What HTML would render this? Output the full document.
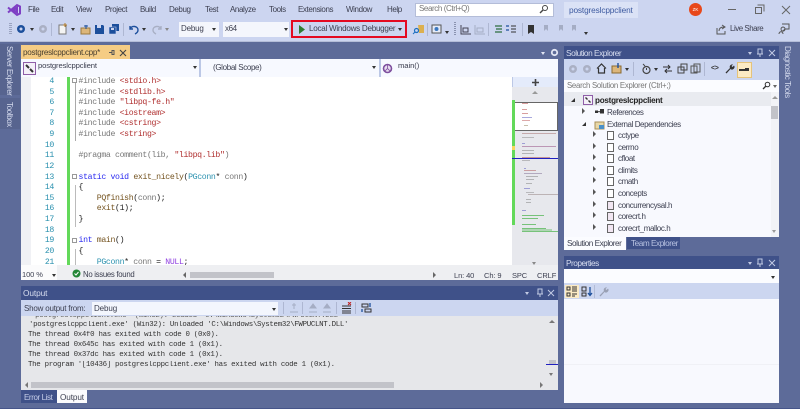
<!DOCTYPE html>
<html><head><meta charset="utf-8"><style>
html,body{margin:0;padding:0}
body{width:800px;height:409px;overflow:hidden;position:relative;background:#5d6b99;font-family:"Liberation Sans",sans-serif;font-size:8px;color:#3c3f50}
.a,.t,.c,.o,svg{position:absolute}
svg{filter:blur(.25px)}
.t{white-space:pre;line-height:10px;letter-spacing:-.4px;filter:blur(.3px)}
.c{font-family:"Liberation Mono",monospace;font-size:8.2px;letter-spacing:-.35px;white-space:pre;line-height:10px;color:#222;left:78.5px;filter:blur(.3px)}
.o{font-family:"Liberation Mono",monospace;font-size:7.4px;letter-spacing:-.29px;white-space:pre;line-height:10px;color:#333;filter:blur(.3px)}
.n{font-family:"Liberation Mono",monospace;font-size:8.2px;letter-spacing:-.35px;line-height:10px;color:#2b91af;position:absolute;left:32px;width:22px;text-align:right;filter:blur(.3px)}
.k{color:#2a2af0}.s{color:#b03030}.g{color:#777}.y{color:#2b91af}.f{color:#74531f}.m{color:#8f3fe0}
.v{writing-mode:vertical-rl;position:absolute;color:#d5dbee;font-size:8px;letter-spacing:-.4px;white-space:pre;filter:blur(.25px)}
.d{width:0;height:0;position:absolute;border-left:2.5px solid transparent;border-right:2.5px solid transparent;border-top:3px solid #333}
.r{width:0;height:0;position:absolute;border-top:3.5px solid transparent;border-bottom:3.5px solid transparent;border-left:3.5px solid #555}
.i{position:absolute;border:1px solid #666;background:#fff;width:5px;height:7px}
</style></head><body>
<div class="a" style="left:0;top:0;width:800px;height:41px;background:#ccd5f0"></div>
<div class="a" style="left:0;top:41px;width:800px;height:1px;background:#b4bdd8"></div>
<svg style="left:7px;top:3px" width="14" height="14" viewBox="0 0 14 14"><path d="M1 4.5L4 7 1 9.5M4 7L10 2l3 1.5v7L10 12 4 7M10 4.7v4.6L7 7z" fill="none" stroke="#7e3fc4" stroke-width="2"/></svg>
<div class="t" style="left:28px;top:5px">File</div>
<div class="t" style="left:51px;top:5px">Edit</div>
<div class="t" style="left:76px;top:5px">View</div>
<div class="t" style="left:105px;top:5px">Project</div>
<div class="t" style="left:140px;top:5px">Build</div>
<div class="t" style="left:169px;top:5px">Debug</div>
<div class="t" style="left:205px;top:5px">Test</div>
<div class="t" style="left:230px;top:5px">Analyze</div>
<div class="t" style="left:269px;top:5px">Tools</div>
<div class="t" style="left:298px;top:5px">Extensions</div>
<div class="t" style="left:346px;top:5px">Window</div>
<div class="t" style="left:387px;top:5px">Help</div>
<div class="a" style="left:415px;top:3px;width:137px;height:12px;background:#fff;border:1px solid #b4bdd8"></div>
<div class="t" style="left:419px;top:4px;color:#777">Search (Ctrl+Q)</div>
<svg style="left:539px;top:4px" width="10" height="10"><circle cx="6" cy="4" r="2.5" fill="none" stroke="#444"/><path d="M4 6L1 9" stroke="#444" stroke-width="1.4"/></svg>
<div class="a" style="left:564px;top:2px;width:74px;height:16px;background:#dbe2f6"></div>
<div class="t" style="left:569px;top:5px;color:#3d5aa0;font-size:8.3px;letter-spacing:-.15px">postgreslcppclient</div>
<div class="a" style="left:689px;top:3px;width:13px;height:13px;border-radius:50%;background:#e8481a;color:#fff;font-size:4.5px;line-height:13px;text-align:center">ZK</div>
<div class="a" style="left:728px;top:9px;width:8px;height:1px;background:#666"></div>
<div class="a" style="left:755px;top:7px;width:5px;height:5px;border:1px solid #666;background:#ccd5f0;box-shadow:1.5px -1.5px 0 0 #ccd5f0,2.5px -2.5px 0 0 #666"></div>
<svg style="left:781px;top:5px" width="10" height="10"><path d="M1 1L9 9M9 1L1 9" stroke="#666"/></svg>

<!-- toolbar -->
<div class="a" style="left:9px;top:23px;width:3px;height:12px;background:repeating-linear-gradient(#9aa3c0 0 1px,transparent 1px 2px)"></div>
<svg style="left:16px;top:24px" width="11" height="11"><circle cx="5" cy="5" r="4" fill="#1c4f9c"/><circle cx="5" cy="5" r="1.5" fill="#ccd5f0"/></svg>
<div class="d" style="left:30px;top:28px"></div>
<svg style="left:38px;top:24px" width="11" height="11"><circle cx="5" cy="5" r="4" fill="#aab0c4"/><circle cx="5" cy="5" r="1.5" fill="#ccd5f0"/></svg>
<div class="a" style="left:51px;top:23px;width:1px;height:13px;background:#aeb7d2"></div>
<svg style="left:58px;top:23px" width="11" height="12"><rect x="1" y="2" width="7" height="9" fill="#f4f4f4" stroke="#777"/><path d="M7 0v4M5 2h4" stroke="#b07a2a"/></svg>
<div class="d" style="left:71px;top:28px"></div>
<svg style="left:80px;top:24px" width="12" height="11"><path d="M1 4h9v6H1z" fill="#dcb67a" stroke="#9b7a3f"/><path d="M6 5V1M4 2h4" stroke="#1c4f9c"/></svg>
<svg style="left:94px;top:24px" width="11" height="11"><path d="M1 1h8l1 1v8H1z" fill="#1c4f9c"/><rect x="3" y="1" width="4" height="3" fill="#ccd5f0"/></svg>
<svg style="left:108px;top:23px" width="12" height="12"><path d="M4 1h7v7H4z" fill="#1c4f9c"/><path d="M1 4h7v7H1z" fill="#1c4f9c" stroke="#ccd5f0" stroke-width=".6"/><rect x="3" y="5" width="3" height="2" fill="#ccd5f0"/></svg>
<div class="a" style="left:123px;top:23px;width:1px;height:13px;background:#aeb7d2"></div>
<svg style="left:128px;top:24px" width="12" height="11"><path d="M2 2v3h3M2 5C4 1 10 2 10 6c0 2-1 3-3 4" fill="none" stroke="#1c4f9c" stroke-width="1.4"/></svg>
<div class="d" style="left:142px;top:28px"></div>
<svg style="left:151px;top:24px" width="12" height="11"><path d="M10 2v3H7M10 5C8 1 2 2 2 6c0 2 1 3 3 4" fill="none" stroke="#a8afc4" stroke-width="1.4"/></svg>
<div class="d" style="left:165px;top:28px;border-top-color:#888"></div>
<div class="a" style="left:179px;top:22px;width:40px;height:15px;background:#f4f6fc"></div>
<div class="t" style="left:181px;top:24px;letter-spacing:-.2px">Debug</div>
<div class="d" style="left:212px;top:28px"></div>
<div class="a" style="left:223px;top:22px;width:66px;height:15px;background:#f4f6fc"></div>
<div class="t" style="left:225px;top:24px">x64</div>
<div class="d" style="left:284px;top:28px"></div>
<div class="a" style="left:291px;top:20px;width:112px;height:14px;border:2px solid #e40a22;box-sizing:content-box;background:#ccd5f0"></div>
<svg style="left:298px;top:25px" width="8" height="9"><path d="M1 0l6 4.5L1 9z" fill="#2e7d32"/></svg>
<div class="t" style="left:309px;top:24px;font-size:8.1px;letter-spacing:-.27px">Local Windows Debugger</div>
<div class="d" style="left:398px;top:28px"></div>
<svg style="left:412px;top:23px" width="13" height="13"><path d="M6 2h6v8H7z" fill="#dcb050"/><circle cx="4.5" cy="7.5" r="2" fill="none" stroke="#1c6fc0" stroke-width="1.2"/><path d="M3 9L1 11" stroke="#1c6fc0"/></svg>
<div class="a" style="left:427px;top:23px;width:1px;height:13px;background:#aeb7d2"></div>
<svg style="left:431px;top:23px" width="12" height="12"><rect x="1" y="2" width="9" height="8" fill="#e5ebf8" stroke="#555"/><circle cx="5.5" cy="6" r="2" fill="#3b78c0"/></svg>
<div class="d" style="left:445px;top:31px"></div>
<div class="a" style="left:454px;top:22px;width:2px;height:13px;background:repeating-linear-gradient(#8a93b0 0 1px,transparent 1px 2px)"></div>
<svg style="left:460px;top:24px" width="12" height="11"><path d="M1 1v9h10M3 4h5v4H3z" fill="none" stroke="#445"/></svg>
<svg style="left:474px;top:24px" width="12" height="11"><path d="M1 1v9h10M3 4h6v4H3z" fill="none" stroke="#a5adc4"/></svg>
<div class="a" style="left:488px;top:23px;width:1px;height:13px;background:#aeb7d2"></div>
<svg style="left:493px;top:24px" width="11" height="11"><path d="M2 2h7M3 5h6M2 8h7" stroke="#2d6d3f" stroke-width="1.2"/></svg>
<svg style="left:506px;top:24px" width="11" height="11"><path d="M5 2h5M5 5h5M5 8h5" stroke="#333"/><path d="M0 2h3M0 6h3" stroke="#1c4f9c" stroke-width="1.3"/></svg>
<div class="a" style="left:522px;top:23px;width:1px;height:13px;background:#aeb7d2"></div>
<svg style="left:527px;top:24px" width="9" height="11"><path d="M1 1h6v9L4 8 1 10z" fill="#333"/></svg>
<svg style="left:542px;top:24px" width="10" height="10"><path d="M2 1h4v6L4 5 2 7zM7 5l2 2" fill="#a5adc4"/></svg>
<svg style="left:557px;top:24px" width="10" height="10"><path d="M2 1h4v6L4 5 2 7zM7 5l2 2" fill="#a5adc4"/></svg>
<svg style="left:570px;top:24px" width="10" height="10"><path d="M2 1h4v6L4 5 2 7zM7 5l2 2" fill="#a5adc4"/></svg>
<div class="d" style="left:584px;top:32px"></div>
<svg style="left:716px;top:24px" width="11" height="11"><path d="M1 4v6h8V7M3 7c0-3 2-4 5-4M6 1l3 2-3 2" fill="none" stroke="#555"/></svg>
<div class="t" style="left:730px;top:24px;font-size:7.9px;letter-spacing:-.45px">Live Share</div>
<svg style="left:778px;top:23px" width="12" height="12"><path d="M4 1h7v5H7L5 8M3 6a2 2 0 110 .1M1 11c0-3 4-3 4 0" fill="none" stroke="#555"/></svg>

<!-- left strip -->
<div class="a" style="left:0;top:44px;width:20px;height:51px;background:#57648f"></div>
<div class="a" style="left:0;top:98px;width:20px;height:31px;background:#57648f"></div>
<div class="v" style="left:5px;top:46px">Server Explorer</div>
<div class="v" style="left:5px;top:102px">Toolbox</div>
<!-- right strip -->
<div class="v" style="left:783px;top:46px">Diagnostic Tools</div>

<!-- tab -->
<div class="a" style="left:21px;top:45px;width:109px;height:14px;background:#f5cc84"></div>
<div class="t" style="left:23px;top:48px;font-size:8.1px;letter-spacing:-.27px;color:#4a4030">postgreslcppclient.cpp*</div>
<svg style="left:108px;top:49px" width="7" height="7"><path d="M1 3.5h3M4 1.5v4h2v-4zM4 1.5h2" fill="none" stroke="#555"/></svg>
<svg style="left:119px;top:49px" width="8" height="8"><path d="M1 1L7 7M7 1L1 7" stroke="#444" stroke-width="1.1"/></svg>
<div class="d" style="left:541px;top:52px;border-top-color:#e2e6f4"></div>
<svg style="left:550px;top:48px" width="9" height="9"><circle cx="4.5" cy="4.5" r="2.7" fill="none" stroke="#e2e6f4" stroke-width="1.8"/></svg>

<!-- nav bar -->
<div class="a" style="left:21px;top:59px;width:537px;height:18px;background:#f7f9ff"></div>
<div class="a" style="left:199px;top:59px;width:1.5px;height:18px;background:#bcc8e6"></div>
<div class="a" style="left:379px;top:59px;width:1.5px;height:18px;background:#bcc8e6"></div>
<svg style="left:23px;top:62px" width="13" height="13"><rect x=".5" y=".5" width="12" height="12" fill="#f4f0f8" stroke="#8f5ea8"/><path d="M3 3l3 3M7 7l3 3" stroke="#333" stroke-width="2"/></svg>
<div class="t" style="left:38px;top:61px;font-size:7.7px;letter-spacing:-.15px">postgreslcppclient</div>
<div class="d" style="left:193px;top:66px"></div>
<div class="t" style="left:213px;top:63px;letter-spacing:-.35px">(Global Scope)</div>
<div class="d" style="left:372px;top:66px"></div>
<svg style="left:382px;top:63px" width="11" height="11"><circle cx="5.5" cy="5.5" r="4" fill="#e8dcf0" stroke="#7e4f9e" stroke-width="1.6"/><path d="M5.5 2v3.5M3 8l2.5-2.5L8 8" stroke="#7e4f9e" stroke-width=".8" fill="none"/></svg>
<div class="t" style="left:398px;top:61px;font-size:7.7px;letter-spacing:-.1px">main()</div>

<!-- editor -->
<div class="a" style="left:21px;top:77px;width:491px;height:188px;background:#fff"></div>
<div class="a" style="left:21px;top:77px;width:10px;height:188px;background:#f0f1f5"></div>
<div class="a" style="left:67px;top:77px;width:3px;height:188px;background:#63d95a"></div>
<div class="a" style="left:75px;top:83px;width:1px;height:58px;background:#aaa"></div>
<div class="a" style="left:75px;top:185px;width:1px;height:42px;background:#bbb"></div>
<div class="a" style="left:75px;top:249px;width:1px;height:16px;background:#bbb"></div>
<div class="a" style="left:72px;top:78px;width:5px;height:5px;border:.7px solid #999;background:#fff;box-sizing:border-box"></div>
<div class="a" style="left:72px;top:174px;width:5px;height:5px;border:.7px solid #999;background:#fff;box-sizing:border-box"></div>
<div class="a" style="left:72px;top:238px;width:5px;height:5px;border:.7px solid #999;background:#fff;box-sizing:border-box"></div>

<div class="n" style="top:77px">4</div><div class="n" style="top:87.5px">5</div><div class="n" style="top:98px">6</div><div class="n" style="top:108.5px">7</div><div class="n" style="top:119px">8</div><div class="n" style="top:130px">9</div><div class="n" style="top:140.5px">10</div><div class="n" style="top:151px">11</div><div class="n" style="top:162px">12</div><div class="n" style="top:172.5px">13</div><div class="n" style="top:183px">14</div><div class="n" style="top:193.5px">15</div><div class="n" style="top:204px">16</div><div class="n" style="top:215px">17</div><div class="n" style="top:225.5px">18</div><div class="n" style="top:236px">19</div><div class="n" style="top:247px">20</div><div class="n" style="top:257.5px">21</div>

<div class="c" style="top:77px"><span class="g">#include</span> <span class="s">&lt;stdio.h&gt;</span></div>
<div class="c" style="top:87.5px"><span class="g">#include</span> <span class="s">&lt;stdlib.h&gt;</span></div>
<div class="c" style="top:98px"><span class="g">#include</span> <span class="s">"libpq-fe.h"</span></div>
<div class="c" style="top:108.5px"><span class="g">#include</span> <span class="s">&lt;iostream&gt;</span></div>
<div class="c" style="top:119px"><span class="g">#include</span> <span class="s">&lt;cstring&gt;</span></div>
<div class="c" style="top:130px"><span class="g">#include</span> <span class="s">&lt;string&gt;</span></div>
<div class="c" style="top:151px"><span class="g">#pragma comment(lib,</span> <span class="s">"libpq.lib"</span><span class="g">)</span></div>
<div class="c" style="top:172.5px"><span class="k">static</span> <span class="k">void</span> <span class="f">exit_nicely</span>(<span class="y">PGconn</span>* <span class="g">conn</span>)</div>
<div class="c" style="top:183px">{</div>
<div class="c" style="top:193.5px">    <span class="f">PQfinish</span>(<span class="g">conn</span>);</div>
<div class="c" style="top:204px">    <span class="f">exit</span>(1);</div>
<div class="c" style="top:215px">}</div>
<div class="c" style="top:236px"><span class="k">int</span> <span class="f">main</span>()</div>
<div class="c" style="top:247px">{</div>
<div class="c" style="top:257.5px">    <span class="y">PGconn</span>* <span class="g">conn</span> = <span class="m">NULL</span>;</div>

<!-- minimap -->
<div class="a" style="left:512px;top:77px;width:46px;height:188px;background:#e7e8ed"></div>
<div class="a" style="left:512px;top:77px;width:46px;height:10px;background:#e4ebfb"></div>
<div class="a" style="left:512px;top:77px;width:1px;height:10px;background:#bcc8e6"></div>
<svg style="left:531px;top:78px" width="9" height="9"><path d="M4.5 1v7M1 4.5h7" stroke="#444" stroke-width="1.6"/></svg>
<div class="a" style="left:532px;top:91px;width:0;height:0;border-left:3px solid transparent;border-right:3px solid transparent;border-bottom:3px solid #999"></div>
<div class="a" style="left:513px;top:102px;width:45px;height:29px;background:#fff;border:1px solid #666;box-sizing:border-box"></div>
<div class="a" style="left:512px;top:100px;width:2.5px;height:125px;background:#63d95a"></div>
<div class="a" style="left:512px;top:146px;width:2.5px;height:4px;background:#f6d860"></div>
<svg style="left:512px;top:100px" width="46" height="140" viewBox="0 0 46 140"><g stroke-width=".9" opacity=".6">
<path d="M10 3.5h6M10 9.5h5M10 13.5h6" stroke="#c06060"/><path d="M10 17.5h10" stroke="#6060c0"/><path d="M10 20.5h8" stroke="#c06060"/><path d="M12 25.5h4" stroke="#998866"/>
<path d="M10 33.5h34" stroke="#b08080"/><path d="M10 37.5h12" stroke="#909090"/><path d="M10 43.5h3" stroke="#6060c0"/><path d="M10 46.5h34" stroke="#a06090"/><path d="M10 50.5h12M10 53.5h12" stroke="#909090"/><path d="M10 57.5h28" stroke="#b06060"/><path d="M10 60.5h8" stroke="#909090"/>
<path d="M12 68.5h2" stroke="#6060c0"/><path d="M12 70.5h12" stroke="#b06060"/><path d="M12 73.5h18" stroke="#9080a0"/><path d="M14 76.5h12M14 79.5h8M14 83.5h6" stroke="#909090"/><path d="M12 88.5h6" stroke="#6060c0"/><path d="M14 92.5h8" stroke="#909090"/><path d="M16 94.5h30" stroke="#a09090"/><path d="M14 99.5h5M14 102.5h5" stroke="#909090"/><path d="M10 110.5h4" stroke="#6060c0"/>
<path d="M10 115.5h22M10 118.5h16M10 124.5h14M10 128.5h24M10 131.5h36M10 130h30" stroke="#2da82d"/></g></svg>
<div class="a" style="left:512px;top:158px;width:46px;height:1px;background:#2020c0"></div>
<div class="d" style="left:532px;top:262px;border-top-color:#888"></div>

<!-- status bar -->
<div class="a" style="left:21px;top:265px;width:537px;height:15px;background:#eeeff2"></div>
<div class="a" style="left:21px;top:265px;width:36px;height:15px;background:#fbfbfc"></div>
<div class="t" style="left:22px;top:270px;font-size:7.5px;letter-spacing:-.1px">100 %</div>
<div class="d" style="left:52px;top:274px"></div>
<svg style="left:72px;top:269px" width="9" height="9"><circle cx="4.5" cy="4.5" r="4" fill="#238636"/><path d="M2.5 4.5l1.5 1.5 2.5-3" fill="none" stroke="#fff"/></svg>
<div class="t" style="left:83px;top:270px;font-size:7.8px;letter-spacing:-.3px">No issues found</div>
<div class="a" style="left:183px;top:272px;width:0;height:0;border-top:3px solid transparent;border-bottom:3px solid transparent;border-right:3px solid #666"></div>
<div class="a" style="left:190px;top:272px;width:84px;height:6px;background:#c2c3c9"></div>
<div class="a" style="left:433px;top:272px;width:0;height:0;border-top:3px solid transparent;border-bottom:3px solid transparent;border-left:3px solid #666"></div>
<div class="t" style="left:454px;top:271px;font-size:7.5px;letter-spacing:-.1px">Ln: 40</div>
<div class="t" style="left:484px;top:271px;font-size:7.5px;letter-spacing:-.1px">Ch: 9</div>
<div class="t" style="left:512px;top:271px;font-size:7.5px;letter-spacing:-.1px">SPC</div>
<div class="t" style="left:537px;top:271px;font-size:7.5px;letter-spacing:-.1px">CRLF</div>

<!-- output panel -->
<div class="a" style="left:21px;top:286px;width:537px;height:14px;background:#3f5189"></div>
<div class="t" style="left:23px;top:288px;color:#d8def0;font-size:8.3px;letter-spacing:-.1px">Output</div>
<div class="d" style="left:525px;top:292px;border-top-color:#c2cae4"></div>
<svg style="left:536px;top:288px" width="8" height="10"><path d="M2 1h4v5H2zM1 6h6M4 6v3" fill="none" stroke="#c2cae4"/></svg>
<svg style="left:547px;top:289px" width="8" height="8"><path d="M1 1L7 7M7 1L1 7" stroke="#c2cae4"/></svg>
<div class="a" style="left:21px;top:300px;width:537px;height:16px;background:#ccd6f0"></div>
<div class="t" style="left:24px;top:304px;letter-spacing:-.2px">Show output from:</div>
<div class="a" style="left:92px;top:302px;width:186px;height:13px;background:#f3f6fd"></div>
<div class="t" style="left:94px;top:304px;letter-spacing:-.1px">Debug</div>
<div class="d" style="left:272px;top:308px"></div>
<div class="a" style="left:283px;top:302px;width:1px;height:12px;background:#aeb7d2"></div>
<svg style="left:289px;top:302px" width="10" height="12"><path d="M5 1v6M3 3h4M1 10h8" stroke="#a5adc4"/></svg>
<div class="a" style="left:302px;top:302px;width:1px;height:12px;background:#aeb7d2"></div>
<svg style="left:308px;top:303px" width="10" height="10"><path d="M1 9h8M5 1L2 5h6z" fill="#a5adc4" stroke="#a5adc4"/></svg>
<svg style="left:322px;top:303px" width="10" height="10"><path d="M1 9h8M5 1L2 5h6z" fill="#a5adc4" stroke="#a5adc4"/></svg>
<div class="a" style="left:336px;top:302px;width:1px;height:12px;background:#aeb7d2"></div>
<svg style="left:341px;top:302px" width="11" height="12"><path d="M1 4h9M1 6.5h9M1 9h9M1 11h9" stroke="#333"/><path d="M7 0l3 3M10 0L7 3" stroke="#c02020"/></svg>
<div class="a" style="left:355px;top:302px;width:1px;height:12px;background:#aeb7d2"></div>
<svg style="left:361px;top:302px" width="11" height="11"><path d="M1 2h6v3H1zM4 7h6v3H4z" fill="none" stroke="#333"/><path d="M9 1v4M1 7v3" stroke="#1c4f9c" stroke-width="1.3"/></svg>

<div class="a" style="left:21px;top:316px;width:537px;height:74px;background:#e6e7ea;overflow:hidden">
<div class="o" style="left:10px;top:-5px;color:#555">'postgreslcppclient.exe' (Win32): Loaded 'C:\Windows\System32\FWPUCLNT.DLL'</div>
<div class="o" style="left:8px;top:3.5px">'postgreslcppclient.exe' (Win32): Unloaded 'C:\Windows\System32\FWPUCLNT.DLL'</div>
<div class="o" style="left:7px;top:13.5px">The thread 0x4f0 has exited with code 0 (0x0).</div>
<div class="o" style="left:7px;top:23.5px">The thread 0x645c has exited with code 1 (0x1).</div>
<div class="o" style="left:7px;top:33.5px">The thread 0x37dc has exited with code 1 (0x1).</div>
<div class="o" style="left:7px;top:43.5px">The program '[10436] postgreslcppclient.exe' has exited with code 1 (0x1).</div>
</div>
<div class="a" style="left:25px;top:382px;width:0;height:0;border-top:3px solid transparent;border-bottom:3px solid transparent;border-right:3px solid #777"></div>
<div class="a" style="left:31px;top:382px;width:363px;height:6px;background:#c2c3c9"></div>
<div class="a" style="left:540px;top:382px;width:0;height:0;border-top:3px solid transparent;border-bottom:3px solid transparent;border-left:3px solid #777"></div>
<div class="a" style="left:549px;top:320px;width:0;height:0;border-left:3px solid transparent;border-right:3px solid transparent;border-bottom:3px solid #777"></div>
<div class="a" style="left:549px;top:360px;width:7px;height:4px;background:#c2c3c9"></div>
<div class="a" style="left:546px;top:364px;width:12px;height:1px;background:#2020c0"></div>
<div class="d" style="left:549px;top:373px;border-top-color:#777"></div>
<div class="a" style="left:21px;top:390px;width:36px;height:13px;background:#3f5189"></div>
<div class="t" style="left:24px;top:393px;color:#c5cde8">Error List</div>
<div class="a" style="left:57px;top:390px;width:30px;height:13px;background:#fbfbfd"></div>
<div class="t" style="left:60px;top:393px;font-size:8.2px;letter-spacing:-.1px">Output</div>

<!-- solution explorer -->
<div class="a" style="left:564px;top:46px;width:215px;height:13px;background:#3f5189"></div>
<div class="t" style="left:566px;top:48px;color:#d8def0;font-size:8.3px;letter-spacing:-.47px">Solution Explorer</div>
<div class="d" style="left:748px;top:52px;border-top-color:#c2cae4"></div>
<svg style="left:756px;top:48px" width="8" height="10"><path d="M2 1h4v5H2zM1 6h6M4 6v3" fill="none" stroke="#c2cae4"/></svg>
<svg style="left:768px;top:49px" width="8" height="8"><path d="M1 1L7 7M7 1L1 7" stroke="#c2cae4"/></svg>
<div class="a" style="left:564px;top:59px;width:215px;height:21px;background:#ccd6f0"></div>
<svg style="left:568px;top:64px" width="10" height="10"><circle cx="5" cy="5" r="4" fill="#aab0c4"/><circle cx="5" cy="5" r="1.5" fill="#ccd6f0"/></svg>
<svg style="left:582px;top:64px" width="10" height="10"><circle cx="5" cy="5" r="4" fill="#aab0c4"/><circle cx="5" cy="5" r="1.5" fill="#ccd6f0"/></svg>
<svg style="left:596px;top:63px" width="11" height="11"><path d="M1 5.5L5.5 1 10 5.5M2.5 5v5h6V5" fill="none" stroke="#333" stroke-width="1.2"/></svg>
<svg style="left:611px;top:63px" width="11" height="11"><path d="M1 3h9v7H1z" fill="#dcb67a" stroke="#8a6a30"/><path d="M7 0v5" stroke="#1c4f9c" stroke-width="1.4"/></svg>
<div class="d" style="left:625px;top:68px"></div>
<div class="a" style="left:633px;top:62px;width:1px;height:14px;background:#aeb7d2"></div>
<svg style="left:641px;top:63px" width="11" height="12"><circle cx="5.5" cy="7" r="3.5" fill="none" stroke="#444" stroke-width="1.2"/><path d="M2 1l2 2" stroke="#444"/><path d="M5.5 5v2" stroke="#444"/></svg>
<div class="d" style="left:654px;top:68px"></div>
<svg style="left:662px;top:64px" width="11" height="10"><path d="M1 3h7M6 1l2 2-2 2M10 7H3M5 5L3 7l2 2" fill="none" stroke="#333"/></svg>
<svg style="left:677px;top:63px" width="11" height="11"><path d="M4 1h6v6H4zM1 4h6v6H1z" fill="#ccd6f0" stroke="#444"/></svg>
<svg style="left:690px;top:63px" width="11" height="11"><path d="M4 1h6v8H4zM1 3h6v7H1z" fill="#ccd6f0" stroke="#555"/></svg>
<div class="a" style="left:704px;top:62px;width:1px;height:14px;background:#aeb7d2"></div>
<div class="t" style="left:711px;top:64px;font-size:7px;font-weight:bold;color:#333">&lt;&gt;</div>
<svg style="left:724px;top:63px" width="11" height="11"><path d="M1.5 9.5L6 5a2.5 2.5 0 013-3.5L7.5 3l1 1 1.5-1.5A2.5 2.5 0 016.5 6L2.5 10.5z" fill="#333"/></svg>
<div class="a" style="left:737px;top:62px;width:13px;height:14px;background:#fbeac4;border:1px solid #e5c37a"></div>
<div class="a" style="left:739px;top:69px;width:10px;height:2px;background:#333"></div>
<div class="a" style="left:745px;top:68px;width:4px;height:3px;background:#333"></div>

<div class="a" style="left:564px;top:80px;width:215px;height:12px;background:#fbfcff"></div>
<div class="t" style="left:567px;top:81px;color:#777;font-size:7.8px;letter-spacing:-.27px">Search Solution Explorer (Ctrl+;)</div>
<svg style="left:762px;top:81px" width="9" height="9"><circle cx="5.5" cy="3.5" r="2.3" fill="none" stroke="#333"/><path d="M4 5L1 8" stroke="#333" stroke-width="1.3"/></svg>
<div class="d" style="left:773px;top:85px;border-top-color:#666"></div>
<div class="a" style="left:564px;top:92px;width:215px;height:145px;background:#f8f9fe"></div>
<div class="a" style="left:564px;top:92px;width:215px;height:14px;background:#e9ebf0"></div>
<div class="a" style="left:771px;top:92px;width:8px;height:145px;background:#f2f3f7"></div>
<div class="a" style="left:772px;top:96px;width:0;height:0;border-left:3px solid transparent;border-right:3px solid transparent;border-bottom:3px solid #999"></div>
<div class="a" style="left:771px;top:106px;width:7px;height:13px;background:#c2c3c9"></div>
<div class="d" style="left:772px;top:230px;border-top-color:#999"></div>

<div class="a" style="left:571px;top:98px;width:0;height:0;border-bottom:4px solid #333;border-left:4px solid transparent"></div>
<svg style="left:583px;top:95px" width="10" height="10"><rect x=".5" y=".5" width="9" height="9" fill="#f4f0f8" stroke="#8f5ea8"/><path d="M2.5 2.5l2 2M5.5 5.5l2 2" stroke="#333" stroke-width="1.4"/></svg>
<div class="t" style="left:595px;top:96px;font-weight:bold;font-size:8.1px;letter-spacing:-.25px;color:#222">postgreslcppclient</div>
<div class="r" style="left:582px;top:108px"></div>
<svg style="left:594px;top:108px" width="11" height="7"><rect x="1" y="2.5" width="3" height="2.5" fill="#333"/><rect x="6" y="1" width="4" height="4.5" fill="#333"/><path d="M3 3.7h4" stroke="#333"/></svg>
<div class="t" style="left:607px;top:108px;letter-spacing:-.45px">References</div>
<div class="a" style="left:582px;top:122px;width:0;height:0;border-bottom:4px solid #333;border-left:4px solid transparent"></div>
<svg style="left:594px;top:119px" width="11" height="11"><path d="M1 3h9v7H1z" fill="#e8d8a8" stroke="#a89058"/><rect x="5" y="6" width="5" height="4" fill="#4a90c8"/></svg>
<div class="t" style="left:607px;top:120px;letter-spacing:-.43px">External Dependencies</div>
<div class="r" style="left:593px;top:131px"></div><div class="i" style="left:607px;top:131px"></div><div class="t" style="left:618px;top:131px">cctype</div>
<div class="r" style="left:593px;top:143px"></div><div class="i" style="left:607px;top:143px"></div><div class="t" style="left:618px;top:143px">cerrno</div>
<div class="r" style="left:593px;top:154px"></div><div class="i" style="left:607px;top:154px"></div><div class="t" style="left:618px;top:154px">cfloat</div>
<div class="r" style="left:593px;top:166px"></div><div class="i" style="left:607px;top:166px"></div><div class="t" style="left:618px;top:166px">climits</div>
<div class="r" style="left:593px;top:177px"></div><div class="i" style="left:607px;top:177px"></div><div class="t" style="left:618px;top:177px">cmath</div>
<div class="r" style="left:593px;top:189px"></div><div class="i" style="left:607px;top:189px"></div><div class="t" style="left:618px;top:189px">concepts</div>
<div class="r" style="left:593px;top:201px"></div><div class="i" style="left:607px;top:201px;background:#f1e6f2"></div><div class="t" style="left:618px;top:201px">concurrencysal.h</div>
<div class="r" style="left:593px;top:212px"></div><div class="i" style="left:607px;top:212px;background:#f1e6f2"></div><div class="t" style="left:618px;top:212px">corecrt.h</div>
<div class="r" style="left:593px;top:224px"></div><div class="i" style="left:607px;top:224px;background:#f1e6f2"></div><div class="t" style="left:618px;top:224px">corecrt_malloc.h</div>

<div class="a" style="left:564px;top:237px;width:62px;height:13px;background:#fbfcff"></div>
<div class="t" style="left:567px;top:239px;font-size:8.2px;letter-spacing:-.47px">Solution Explorer</div>
<div class="a" style="left:627px;top:237px;width:53px;height:12px;background:#3f5189"></div>
<div class="t" style="left:631px;top:239px;color:#b9c3e2;font-size:8.2px;letter-spacing:-.45px">Team Explorer</div>

<!-- properties -->
<div class="a" style="left:564px;top:256px;width:215px;height:13px;background:#3f5189"></div>
<div class="t" style="left:566px;top:258px;color:#d8def0;font-size:8.3px;letter-spacing:-.5px">Properties</div>
<div class="d" style="left:748px;top:262px;border-top-color:#c2cae4"></div>
<svg style="left:756px;top:258px" width="8" height="10"><path d="M2 1h4v5H2zM1 6h6M4 6v3" fill="none" stroke="#c2cae4"/></svg>
<svg style="left:768px;top:259px" width="8" height="8"><path d="M1 1L7 7M7 1L1 7" stroke="#c2cae4"/></svg>
<div class="a" style="left:564px;top:269px;width:215px;height:14px;background:#fbfcff"></div>
<div class="d" style="left:771px;top:276px"></div>
<div class="a" style="left:564px;top:283px;width:215px;height:16px;background:#ccd6f0"></div>
<div class="a" style="left:565px;top:285px;width:14px;height:13px;background:#fbeac4"></div>
<svg style="left:566px;top:286px" width="12" height="11"><path d="M1 1h3v3H1zM1 7h3v3H1z" fill="none" stroke="#333"/><path d="M6 1h5M6 3h5M6 5h5M6 8h5M6 10h3" stroke="#333"/></svg>
<svg style="left:581px;top:286px" width="12" height="11"><path d="M1 1h4v4H1zM1 7h4v3H1z" fill="none" stroke="#333"/><path d="M9 1v8M7 7l2 2.5L11 7" fill="none" stroke="#1c4f9c" stroke-width="1.3"/></svg>
<div class="a" style="left:594px;top:285px;width:1px;height:13px;background:#b3bcd6"></div>
<svg style="left:598px;top:286px" width="11" height="11"><path d="M1.5 9.5L6 5a2.5 2.5 0 013-3.5L7.5 3l1 1 1.5-1.5A2.5 2.5 0 016.5 6L2.5 10.5z" fill="#99a0b4"/></svg>
<div class="a" style="left:564px;top:299px;width:215px;height:104px;background:#f8f9fe"></div>
<div class="a" style="left:564px;top:364px;width:215px;height:1px;background:#f0f1f6"></div>
<div class="a" style="left:0;top:408px;width:800px;height:1px;background:#46558a"></div>
</body></html>
